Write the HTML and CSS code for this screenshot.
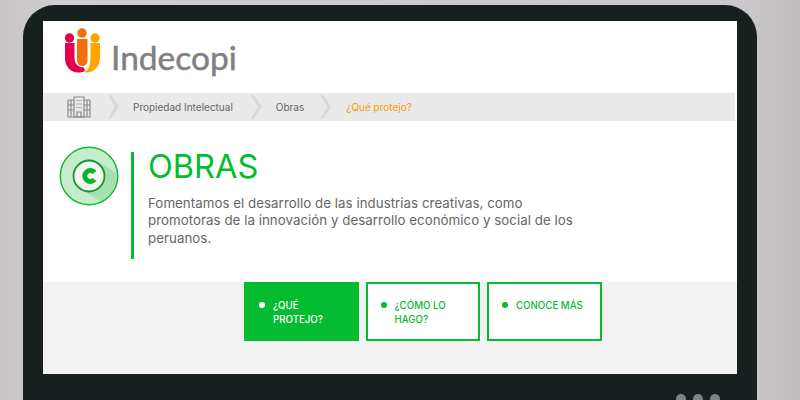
FILE: index.html
```html
<!DOCTYPE html>
<html lang="es">
<head>
    <meta charset="UTF-8">
    <title>Indecopi - Obras</title>
    <link rel="stylesheet" href="styles.css">
</head>
<body>
    <div class="device">
        <div class="screen">
            <header class="header">
                <svg class="logo-mark" width="37" height="46" viewBox="0 0 37 46">
                    <circle cx="5.500" cy="10" r="4.700" fill="#e5004f"/>
                    <path d="M1 15 H10.500 V30 C10.500 36 14 39 20 39.500 L21 43 C19 44 17 44.500 14 44.500 C6 44.500 1 38 1 30 Z" fill="#e5004f"/>
                    <circle cx="18" cy="5" r="4.700" fill="#f36f0b"/>
                    <path d="M13 11 H23.500 V32 C23.500 36 21 38 18.500 38 C15 38 13 35 13 32 Z" fill="#f36f0b"/>
                    <circle cx="31" cy="10" r="4.700" fill="#ffa400"/>
                    <path d="M26.500 15 H36 V30 C36 39 29 45 22 44.500 L20 44 C24 43 26.500 38 26.500 30 Z" fill="#ffa400"/>
                </svg>
                <span class="logo-text">Indecopi</span>
            </header>

            <nav class="crumbs">
                <svg class="home-icon" width="24" height="22" viewBox="0 0 24 22" fill="none" stroke="#8a8a8a" stroke-width="1.200">
                    <path d="M7 1 H17 V21 H7 Z"/>
                    <path d="M1 4 H7 M17 4 H23 M1 4 V21 H23 V4 M1 9 H7 M1 14 H7 M17 9 H23 M17 14 H23 M4 4 V21 M20 4 V21 M10 16 H14 V21 H10 Z"/>
                    <path d="M10 4 V5 M12 4 V5 M14 4 V5 M10 7.500 V8.500 M12 7.500 V8.500 M14 7.500 V8.500 M10 11 V12 M12 11 V12 M14 11 V12"/>
                </svg>
                <span class="chevron"></span>
                <span class="crumb crumb-first">Propiedad Intelectual</span>
                <span class="chevron"></span>
                <span class="crumb crumb-second">Obras</span>
                <span class="chevron"></span>
                <span class="crumb crumb-active">¿Qué protejo?</span>
            </nav>

            <section class="intro">
                <svg class="intro-icon" width="60" height="60" viewBox="0 0 60 60">
                    <circle cx="30" cy="30" r="28.700" fill="#c5eccb" stroke="#0dbb30" stroke-width="1.500"/>
                    <path d="M41 17 L57.500 27 A27.500 27.500 0 0 1 41 55 L20 42 Z" fill="#a6e0ae"/>
                    <circle cx="30" cy="30" r="15.500" fill="#f4f4f4" stroke="#0a9a27" stroke-width="1.800"/>
                    <path d="M35.500 26.500 A5.500 5.500 0 1 0 35.500 33.500" fill="none" stroke="#09b52b" stroke-width="5"/>
                </svg>
                <div class="intro-body">
                    <h1>OBRAS</h1>
                    <p>Fomentamos el desarrollo de las industrias creativas, como<br>promotoras de la innovación y desarrollo económico y social de los<br>peruanos.</p>
                </div>
            </section>

            <section class="options">
                <a class="option option-on"><span class="dot"></span><span>¿QUÉ PROTEJO?</span></a>
                <a class="option"><span class="dot"></span><span>¿CÓMO LO HAGO?</span></a>
                <a class="option"><span class="dot"></span><span>CONOCE MÁS</span></a>
            </section>
        </div>
        <div class="device-dots">
            <span></span>
            <span></span>
            <span></span>
        </div>
    </div>
</body>
</html>
```

FILE: styles.css
```css
:root {
    --green: #05bb30;
    --frame: #181f1f;
    --text-gray: #666666;
}

* {
    margin: 0;
    padding: 0;
    box-sizing: border-box;
}

html, body {
    height: 400px;
    overflow: hidden;
}

body {
    font-family: Inter, "Liberation Sans", sans-serif;
    background: linear-gradient(90deg, #c6c4c5 0%, #cfcdcf 6%, #c9c7c9 94%, #bdbbbc 100%);
    padding: 5px 43px 0 23px;
}

.device {
    width: 734px;
    height: 395px;
    overflow: hidden;
    background: var(--frame);
    border-radius: 32px 32px 0 0;
    padding: 16px 20px 0;
}

.screen {
    height: 353px;
    background: white;
    display: flex;
    flex-direction: column;
}

.header {
    height: 71.500px;
    display: flex;
    align-items: flex-start;
    padding: 7px 0 0 21px;
    gap: 10px;
}

.logo-text {
    font-family: Lato, sans-serif;
    font-size: 33.500px;
    line-height: 58px;
    color: #808080;
    -webkit-text-stroke: 0.5px #808080;
}

.crumbs {
    height: 28.500px;
    width: 692px;
    background: #e9e9e9;
    display: flex;
    align-items: center;
    padding-left: 24px;
    font-size: 10px;
    color: var(--text-gray);
}

.home-icon {
    margin-right: 17px;
}

.chevron {
    flex: none;
    width: 11px;
    height: 24px;
    background: #d8d8d8;
    clip-path: polygon(0 0, 25% 0, 100% 50%, 25% 100%, 0 100%, 62% 50%);
}

.crumb {
    white-space: nowrap;
}

.crumb-first {
    margin: 0 18px 0 14px;
}

.crumb-second {
    margin: 0 16px 0 14px;
}

.crumb-active {
    margin-left: 15px;
    color: #ff9c00;
}

.intro {
    height: 161px;
    display: flex;
    padding: 25px 0 0 15.500px;
}

.intro-icon {
    flex: none;
}

.intro-body {
    margin: 6px 0 0 12.500px;
    height: 107px;
    width: 480px;
    border-left: 3px solid var(--green);
    padding-left: 14px;
}

.intro-body h1 {
    font-size: 32.500px;
    font-weight: 400;
    line-height: 30px;
    color: var(--green);
}

.intro-body p {
    margin-top: 12.500px;
    font-size: 13.300px;
    line-height: 17.500px;
    letter-spacing: 0.04px;
    color: var(--text-gray);
    white-space: nowrap;
}

.options {
    flex: 1;
    background: #f2f2f2;
    display: flex;
    align-items: flex-start;
    padding-left: 201px;
    gap: 7px;
}

.option {
    width: 114.500px;
    height: 59px;
    background: white;
    border: 2px solid var(--green);
    color: var(--green);
    display: flex;
    align-items: flex-start;
    gap: 8px;
    padding: 15px 13px;
    font-size: 9.700px;
    font-weight: 500;
    line-height: 14px;
}

.option-on {
    background: var(--green);
    color: white;
}

.dot {
    flex: none;
    width: 6px;
    height: 6px;
    margin-top: 3px;
    border-radius: 50%;
    background: currentColor;
}

.device-dots {
    display: flex;
    justify-content: flex-end;
    gap: 7px;
    padding: 20px 17px 0 0;
}

.device-dots span {
    width: 10px;
    height: 10px;
    border-radius: 50%;
    background: #7f8484;
}
```
